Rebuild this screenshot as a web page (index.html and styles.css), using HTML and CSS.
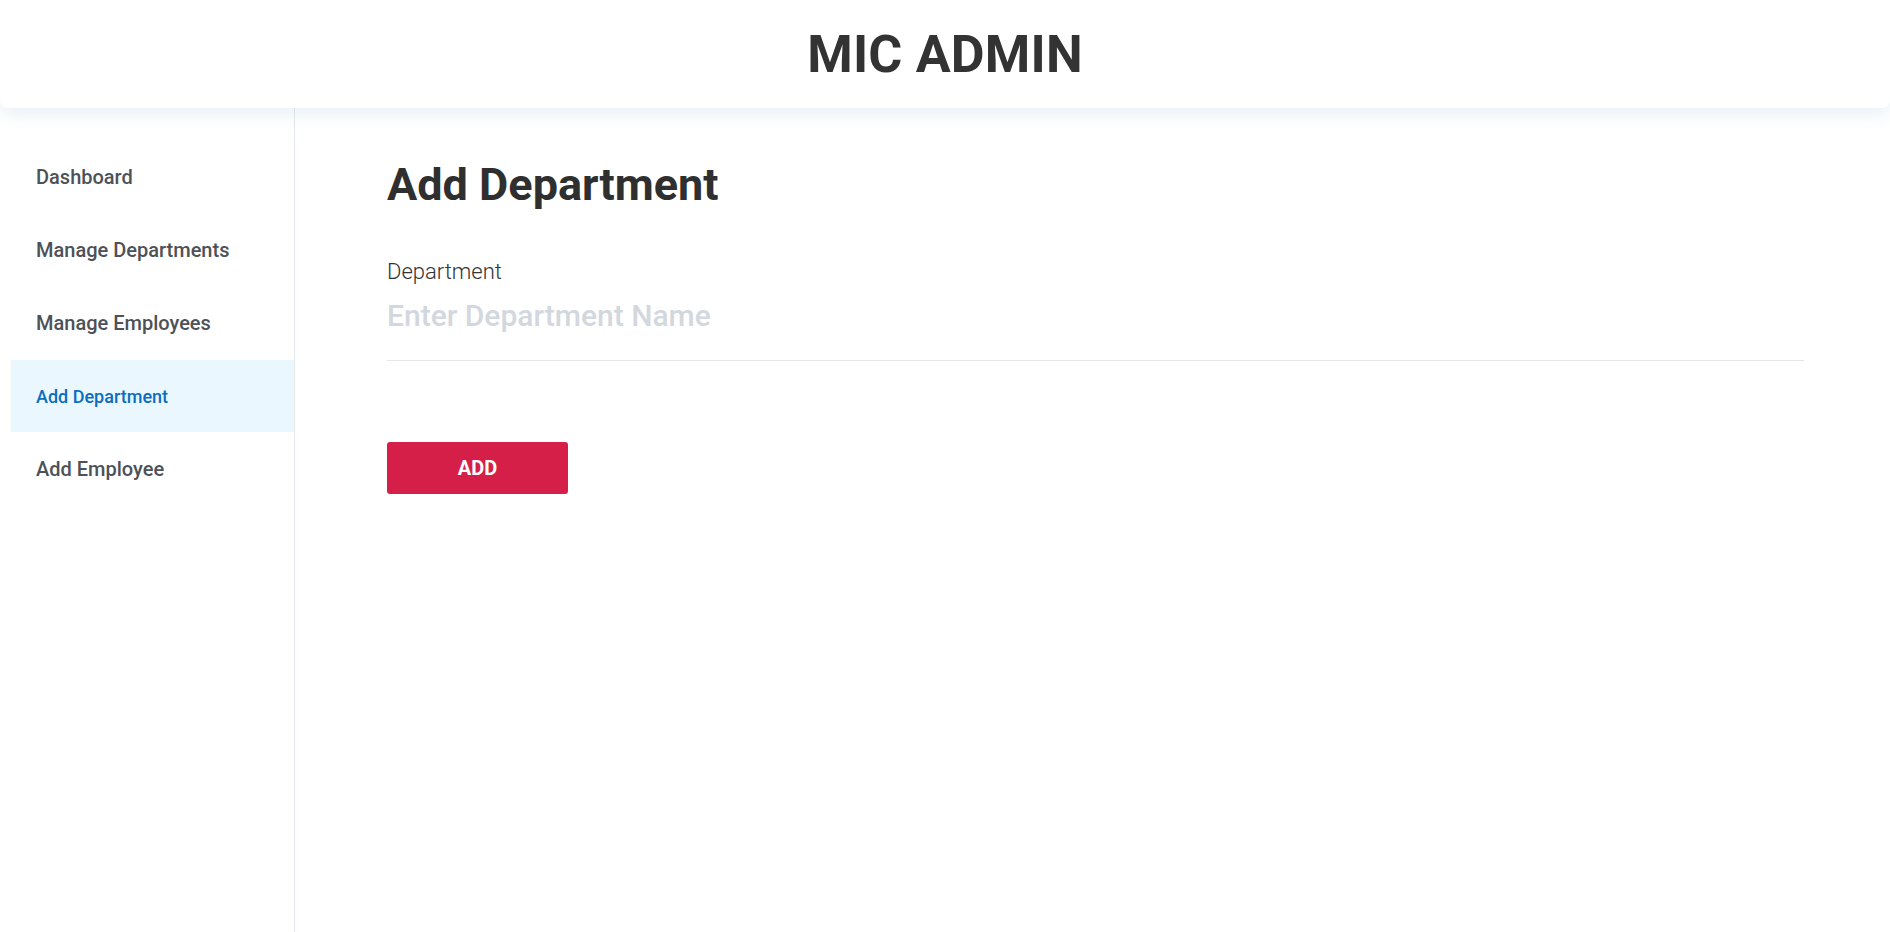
FILE: index.html
```html
<!DOCTYPE html>
<html lang="en">
<head>
<meta charset="utf-8">
<title>MIC ADMIN</title>
<link rel="stylesheet" href="styles.css">
</head>
<body>
<header class="topbar">
  <h1 class="brand">MIC ADMIN</h1>
</header>
<div class="layout">
  <nav class="sidebar">
    <a class="nav-item" href="#">Dashboard</a>
    <a class="nav-item" href="#">Manage Departments</a>
    <a class="nav-item" href="#">Manage Employees</a>
    <a class="nav-item active" href="#">Add Department</a>
    <a class="nav-item" href="#">Add Employee</a>
  </nav>
  <main class="content">
    <h2 class="page-title">Add Department</h2>
    <form class="form">
      <label class="field-label" for="dept">Department</label>
      <input class="field-input" id="dept" type="text" placeholder="Enter Department Name">
      <button class="btn-add" type="button">ADD</button>
    </form>
  </main>
</div>
</body>
</html>
```

FILE: styles.css
```css
* { box-sizing: border-box; }
html, body {
  margin: 0;
  padding: 0;
  height: 100%;
  background: #ffffff;
  font-family: Roboto, "Noto Sans", "Liberation Sans", sans-serif;
}
body {
  display: flex;
  flex-direction: column;
  overflow: hidden;
}
.topbar {
  position: relative;
  z-index: 2;
  height: 108px;
  flex: 0 0 108px;
  background: #ffffff;
  border-radius: 0 0 8px 8px;
  box-shadow: 0 6px 18px rgba(120, 160, 200, 0.16);
  display: flex;
  align-items: center;
  justify-content: center;
  padding-top: 2px;
}
.brand {
  margin: 0;
  font-size: 52px;
  font-weight: 700;
  color: #333333;
  line-height: 1;
  letter-spacing: 0.2px;
}
.layout {
  flex: 1;
  display: flex;
  min-height: 0;
}
.sidebar {
  width: 295px;
  flex: 0 0 295px;
  border-right: 1px solid #e4e7eb;
  padding: 33px 0 0 11px;
  display: flex;
  flex-direction: column;
  gap: 1px;
}
.nav-item {
  display: flex;
  align-items: center;
  height: 72px;
  padding-left: 25px;
  font-size: 20px;
  font-weight: 500;
  color: #4d5158;
  text-decoration: none;
}
.nav-item.active {
  background: #ebf7fe;
  color: #0b6dbd;
  font-size: 18px;
}
.content {
  flex: 1;
  padding: 51px 86px 0 92px;
}
.page-title {
  margin: 0;
  font-size: 45px;
  line-height: 52px;
  font-weight: 700;
  color: #2f2f2f;
}
.form {
  display: flex;
  flex-direction: column;
  align-items: flex-start;
  margin-top: 48px;
}
.field-label {
  font-size: 22px;
  line-height: 26px;
  font-weight: 300;
  color: #333333;
}
.field-input {
  margin-top: 12px;
  width: 100%;
  border: 0;
  border-bottom: 1px solid #e6e6e6;
  padding: 0 0 27px 0;
  font-family: inherit;
  font-size: 30px;
  line-height: 36px;
  height: 64px;
  font-weight: 500;
  color: #333333;
  outline: none;
  background: transparent;
}
.field-input::placeholder {
  color: #d3d7de;
  font-weight: 500;
}
.btn-add {
  margin-top: 81px;
  width: 181px;
  height: 52px;
  border: 0;
  border-radius: 3px;
  background: #d61f48;
  color: #ffffff;
  font-family: inherit;
  font-size: 20px;
  font-weight: 700;
  cursor: pointer;
}
```
